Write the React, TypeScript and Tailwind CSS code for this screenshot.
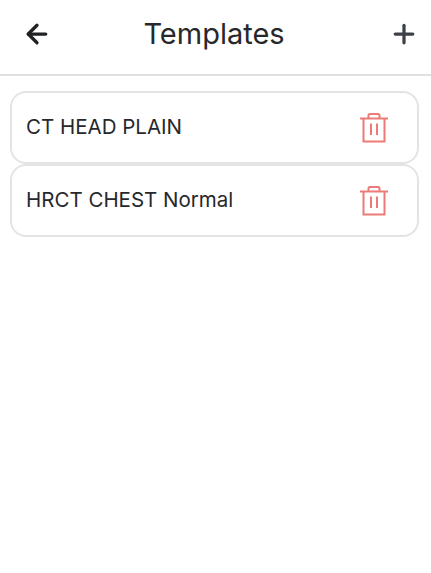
import { ArrowLeft, Plus } from "lucide-react";

const templates = ["CT HEAD PLAIN", "HRCT CHEST Normal"];

const TrashIcon = () => (
  <svg width="30" height="32" viewBox="0 0 30 32" fill="none" stroke="#ec7a76" strokeWidth="2" className="shrink-0">
    <path d="M1 6.5h28" />
    <path d="M9.5 6V3.5q0-1.5 1.5-1.5h8q1.500 0 1.500 1.500V6" />
    <path d="M4.500 7v22.500h21V7" />
    <path d="M12 11.500v11.500M18 11.500v11.500" />
  </svg>
);

export default function App() {
  return (
    <div className="min-h-[573px] bg-white font-['Inter','Noto_Sans',sans-serif] text-[#26282c]">
      <header className="flex h-[76px] items-center justify-between border-b-2 border-[#e0e0e0] pb-[7px] pl-[22px] pr-[12px]">
        <ArrowLeft size={30} strokeWidth={2.6} className="text-[#1f2125]" />
        <h1 className="mr-[13px] text-[29px] leading-none">Templates</h1>
        <Plus size={30} strokeWidth={2.6} className="text-[#3c4047]" />
      </header>

      <div className="flex flex-col pl-[10px] pr-[12px] pt-[15px]">
        {templates.map((name) => (
          <div
            key={name}
            className="flex h-[73px] items-center justify-between rounded-[16px] border-2 border-[#e4e4e4] pl-[14px] pr-[28px]"
          >
            <span className="text-[20.5px]">{name}</span>
            <TrashIcon />
          </div>
        ))}
      </div>
    </div>
  );
}
